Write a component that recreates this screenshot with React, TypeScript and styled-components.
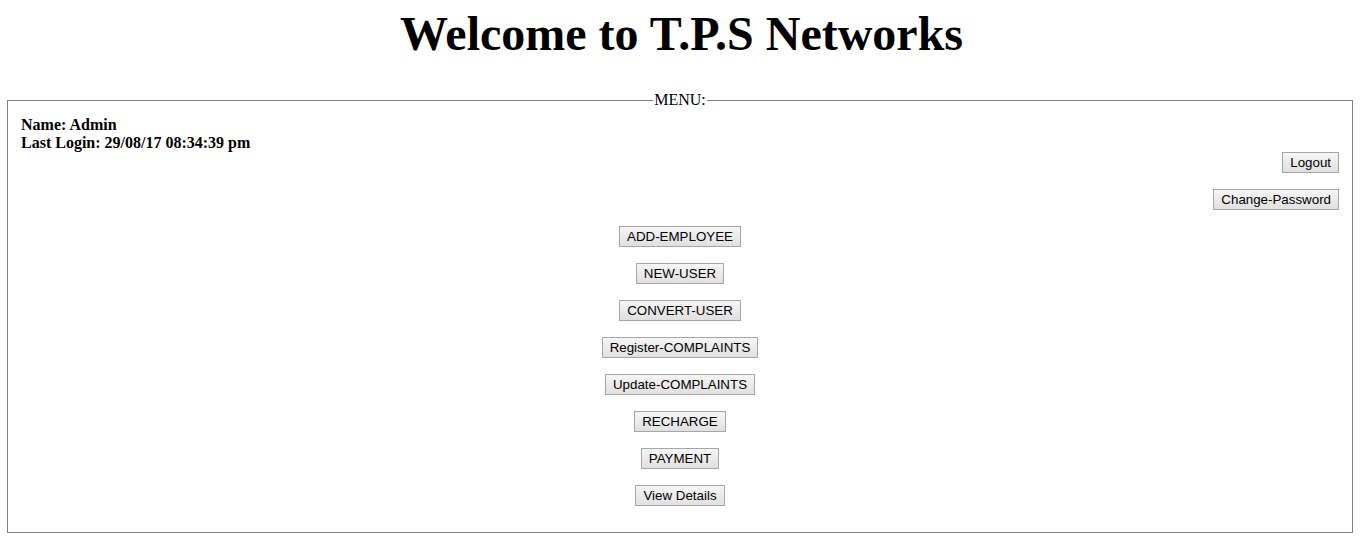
import React from "react";
import styled, { createGlobalStyle } from "styled-components";

const GlobalStyle = createGlobalStyle`
  html, body {
    margin: 0;
    padding: 0;
    background: #ffffff;
  }
  body {
    padding: 0 7px;
    font-family: "Liberation Serif", "Times New Roman", serif;
    font-size: 16px;
    color: #000000;
  }
`;

const Title = styled.h1`
  margin: 0;
  padding-top: 8px;
  height: 84px;
  text-align: center;
  font-family: "Liberation Serif", "Times New Roman", serif;
  font-size: 48px;
  font-weight: bold;
  line-height: 52px;
`;

const MenuBox = styled.fieldset`
  margin: 0 3px 0 0;
  padding: 8px 13px 26px 13px;
  border: 1px solid #7f7f7f;
  box-sizing: border-box;
`;

const MenuTitle = styled.legend`
  margin: 0 auto;
  padding: 0 1px;
  font-size: 16px;
  line-height: 1;
`;

const UserInfo = styled.div`
  font-weight: bold;
  font-size: 16px;
  line-height: 18px;
`;

const Row = styled.div<{ $align?: "center" | "right"; $first?: boolean }>`
  display: flex;
  justify-content: ${(p) => (p.$align === "right" ? "flex-end" : "center")};
  margin-top: ${(p) => (p.$first ? "0" : "16px")};
`;

const Button = styled.button`
  height: 21px;
  padding: 0 7px;
  font-family: "Liberation Sans", Arial, sans-serif;
  font-size: 13.33px;
  line-height: 19px;
  color: #000000;
  border: 1px solid #a6a6a6;
  border-radius: 0;
  background: linear-gradient(#f6f6f6, #e0e0e0);
  cursor: pointer;
`;

const topActions = ["Logout", "Change-Password"];

const menuActions = [
  "ADD-EMPLOYEE",
  "NEW-USER",
  "CONVERT-USER",
  "Register-COMPLAINTS",
  "Update-COMPLAINTS",
  "RECHARGE",
  "PAYMENT",
  "View Details",
];

const App: React.FC = () => {
  return (
    <>
      <GlobalStyle />
      <Title>Welcome to T.P.S Networks</Title>
      <MenuBox>
        <MenuTitle>MENU:</MenuTitle>
        <UserInfo>
          Name: Admin
          <br />
          Last Login: 29/08/17 08:34:39 pm
        </UserInfo>
        {topActions.map((label, i) => (
          <Row key={label} $align="right" $first={i === 0}>
            <Button type="button">{label}</Button>
          </Row>
        ))}
        {menuActions.map((label) => (
          <Row key={label}>
            <Button type="button">{label}</Button>
          </Row>
        ))}
      </MenuBox>
    </>
  );
};

export default App;
